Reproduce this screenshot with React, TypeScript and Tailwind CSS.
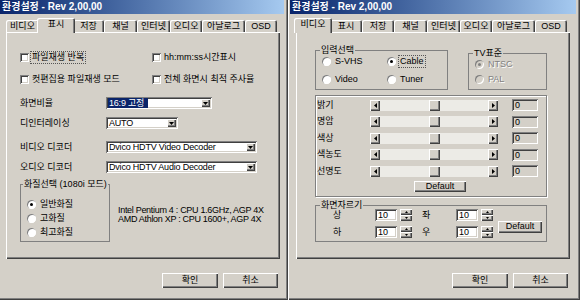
import React from "react";

const RAISED =
  "shadow-[inset_1px_1px_0_#ffffff,inset_-1px_-1px_0_#404040,inset_-2px_-2px_0_#808080]";
const SUNKEN =
  "shadow-[inset_1px_1px_0_#808080,inset_-1px_-1px_0_#ffffff,inset_2px_2px_0_#404040,inset_-2px_-2px_0_#d4d0c8]";
// fieldsets get the plain grey line; a box-shadow there would also run over the legend
const GROUP = "border border-[#808080]";
const BOX = "border border-[#808080] shadow-[inset_1px_1px_0_#ffffff,1px_1px_0_#ffffff]";

function Tri({ dir, color = "#000" }: { dir: "down" | "left" | "right" | "su" | "sd"; color?: string }) {
  if (dir === "down")
    return (
      <svg width="5" height="3" viewBox="0 0 5 3">
        <polygon points="0,0 5,0 2.5,3" fill={color} />
      </svg>
    );
  if (dir === "su")
    return (
      <svg width="3" height="2" viewBox="0 0 3 2">
        <polygon points="0,2 3,2 1.5,0" fill={color} />
      </svg>
    );
  if (dir === "sd")
    return (
      <svg width="3" height="2" viewBox="0 0 3 2">
        <polygon points="0,0 3,0 1.5,2" fill={color} />
      </svg>
    );
  if (dir === "left")
    return (
      <svg width="3" height="5" viewBox="0 0 3 5">
        <polygon points="3,0 3,5 0,2.5" fill={color} />
      </svg>
    );
  return (
    <svg width="3" height="5" viewBox="0 0 3 5">
      <polygon points="0,0 0,5 3,2.5" fill={color} />
    </svg>
  );
}

function Btn({ className = "", children }: { className?: string; children?: React.ReactNode }) {
  return (
    <div className={`flex items-center justify-center bg-[#d4d0c8] ${RAISED} ${className}`}>{children}</div>
  );
}

function Check({ label, focus }: { label: string; focus?: boolean }) {
  return (
    <div className="flex items-center h-[11px]">
      <span className={`w-[9px] h-[9px] bg-white ${SUNKEN}`} />
      <span
        className={`ml-[2px] px-px leading-[11px] ${focus ? "outline outline-1 outline-dotted outline-[#555]" : ""}`}
      >
        {label}
      </span>
    </div>
  );
}

function Radio({
  label,
  checked,
  disabled,
  focus,
}: {
  label: string;
  checked?: boolean;
  disabled?: boolean;
  focus?: boolean;
}) {
  return (
    <div className="flex items-center h-[11px]">
      <span
        className={`w-[9px] h-[9px] rounded-full flex items-center justify-center shadow-[inset_1px_1px_0_#808080,inset_-1px_-1px_0_#ffffff] ${
          disabled ? "bg-[#d4d0c8]" : "bg-white"
        }`}
      >
        {checked && (
          <span className={`w-[3px] h-[3px] rounded-full ${disabled ? "bg-[#808080]" : "bg-black"}`} />
        )}
      </span>
      <span
        className={`ml-[3px] px-px leading-[11px] ${
          disabled ? "text-[#808080] [text-shadow:1px_1px_0_#ffffff]" : ""
        } ${focus ? "outline outline-1 outline-dotted outline-[#555]" : ""}`}
      >
        {label}
      </span>
    </div>
  );
}

function Combo({ value, className, hl }: { value: string; className: string; hl?: boolean }) {
  return (
    <div className={`flex items-center h-[12px] bg-white pl-[2px] pr-[2px] ${SUNKEN} ${className}`}>
      <span className={`flex-1 leading-[9px] tracking-[-0.2px] ${hl ? "" : "pl-px"}`}>
        <span className={hl ? "bg-[#0a246a] text-white px-px pr-[4px]" : ""}>{value}</span>
      </span>
      <Btn className="w-[9px] h-[8px]">
        <Tri dir="down" />
      </Btn>
    </div>
  );
}

function Scroll() {
  return (
    <div className="flex w-[128px] h-[11px]">
      <Btn className="w-[10px] h-[11px]">
        <Tri dir="left" />
      </Btn>
      <div className="flex-1 flex justify-center bg-[#ecebe6]">
        <Btn className="w-[11px] h-[11px]" />
      </div>
      <Btn className="w-[10px] h-[11px]">
        <Tri dir="right" />
      </Btn>
    </div>
  );
}

function SpinEdit() {
  return (
    <div className="flex items-center">
      <div className={`w-[22px] h-[12px] bg-white pl-[3px] leading-[12px] ${SUNKEN}`}>10</div>
      <div className="ml-[3px] flex flex-col w-[12px] h-[12px]">
        <Btn className="h-[6px]">
          <Tri dir="su" />
        </Btn>
        <Btn className="h-[6px]">
          <Tri dir="sd" />
        </Btn>
      </div>
    </div>
  );
}

function Tab({ label, w, sel }: { label: string; w: string; sel?: boolean }) {
  return (
    <div
      className={`${w} flex items-center justify-center bg-[#d4d0c8] rounded-t-[2px] shadow-[inset_1px_1px_0_#ffffff,inset_-1px_0_0_#404040,inset_-2px_0_0_#808080] ${
        sel ? "relative z-10 -mx-[2px] h-[15px] -mb-px pb-[2px]" : "h-[12px]"
      }`}
    >
      {label}
    </div>
  );
}

function TitleBar() {
  return (
    <div className="h-[14px] bg-linear-to-r from-[#0a246a] to-[#a6caf0] text-white font-bold text-[10px] leading-[14px] pl-[2px]">
      환경설정 - Rev 2,00,00
    </div>
  );
}

function Buttons() {
  return (
    <div className="flex gap-[5px] ml-[162px] mt-[14px]">
      <Btn className="w-[56px] h-[15px]">확인</Btn>
      <Btn className="w-[55px] h-[15px]">취소</Btn>
    </div>
  );
}

const PANEL =
  "ml-[6px] w-[274px] h-[227px] bg-[#d4d0c8] shadow-[inset_1px_1px_0_#ffffff,inset_-1px_-1px_0_#404040,inset_-2px_-2px_0_#808080]";

function DisplayWindow() {
  return (
    <div className="flex flex-col h-[300px] w-[288px] pr-[4px] bg-[#d4d0c8] shadow-[inset_-1px_-1px_0_#404040,inset_-2px_-2px_0_#808080]">
      <TitleBar />
      <div className="flex items-end h-[18px] pl-[6px]">
        <Tab label="비디오" w="w-[33px]" />
        <Tab label="표시" w="w-[38px]" sel />
        <Tab label="저장" w="w-[31px]" />
        <Tab label="채널" w="w-[33px]" />
        <Tab label="인터넷" w="w-[33px]" />
        <Tab label="오디오" w="w-[32px]" />
        <Tab label="아날로그" w="w-[43px]" />
        <Tab label="OSD" w="w-[32px]" />
      </div>
      <div className={`${PANEL} flex flex-col pl-[14px]`}>
        <div className="grid grid-cols-[132px_1fr] gap-y-[11px] mt-[20px]">
          <Check label="파일재생 반복" focus />
          <Check label="hh:mm:ss시간표시" />
          <Check label="컷편집용 파일재생 모드" />
          <Check label="전체 화면시 최적 주사율" />
        </div>
        <div className="flex items-center mt-[12px]">
          <span className="w-[86px]">화면비율</span>
          <Combo value="16:9 고정" className="w-[106px]" hl />
        </div>
        <div className="flex items-center mt-[8px]">
          <span className="w-[86px]">디인터레이싱</span>
          <Combo value="AUTO" className="w-[72px]" />
        </div>
        <div className="flex items-center mt-[12px]">
          <span className="w-[86px]">비디오 디코더</span>
          <Combo value="Dvico HDTV Video Decoder" className="w-[151px]" />
        </div>
        <div className="flex items-center mt-[8px]">
          <span className="w-[86px]">오디오 디코더</span>
          <Combo value="Dvico HDTV Audio Decoder" className="w-[151px]" />
        </div>
        <div className="flex items-start mt-[6px]">
          <fieldset className={`${GROUP} w-[90px] h-[63px]`}>
            <legend className="ml-[2px] px-px leading-[11px] whitespace-nowrap">화질선택 (1080i 모드)</legend>
            <div className="flex flex-col gap-[3px] pl-[6px] pt-[9px]">
              <Radio label="일반화질" checked />
              <Radio label="고화질" />
              <Radio label="최고화질" />
            </div>
          </fieldset>
          <div className="ml-[8px] mt-[27px] leading-[9px] tracking-[-0.3px]">
            <div>Intel Pentium 4 : CPU 1.6GHz, AGP 4X</div>
            <div>AMD Athlon XP : CPU 1600+, AGP 4X</div>
          </div>
        </div>
      </div>
      <Buttons />
    </div>
  );
}

function SliderRow({ label }: { label: string }) {
  return (
    <div className="flex items-center h-[12px]">
      <span className="w-[53px]">{label}</span>
      <Scroll />
      <div className={`ml-[14px] w-[26px] h-[12px] pl-[3px] leading-[12px] bg-[#d4d0c8] ${SUNKEN}`}>0</div>
    </div>
  );
}

function VideoWindow() {
  return (
    <div className="flex flex-col h-[300px] w-[292px] pl-[2px] pr-[4px] bg-[#d4d0c8] shadow-[inset_1px_0_0_#ffffff,inset_-1px_-1px_0_#404040,inset_-2px_-2px_0_#808080]">
      <TitleBar />
      <div className="flex items-end h-[18px] pl-[6px]">
        <Tab label="비디오" w="w-[38px]" sel />
        <Tab label="표시" w="w-[32px]" />
        <Tab label="저장" w="w-[32px]" />
        <Tab label="채널" w="w-[33px]" />
        <Tab label="인터넷" w="w-[33px]" />
        <Tab label="오디오" w="w-[32px]" />
        <Tab label="아날로그" w="w-[43px]" />
        <Tab label="OSD" w="w-[32px]" />
      </div>
      <div className={`${PANEL} flex flex-col pl-[19px]`}>
        <div className="flex items-start">
          <fieldset className={`${GROUP} w-[133px] h-[45px] mt-[13px]`}>
            <legend className="ml-[4px] px-px leading-[11px]">입력선택</legend>
            <div className="grid grid-cols-[65px_1fr] gap-y-[7px] pl-[6px]">
              <Radio label="S-VHS" />
              <Radio label="Cable" checked focus />
              <Radio label="Video" />
              <Radio label="Tuner" />
            </div>
          </fieldset>
          <fieldset className={`${GROUP} w-[79px] h-[42px] mt-[16px] ml-[20px]`}>
            <legend className="ml-[4px] px-px leading-[11px]">TV표준</legend>
            <div className="flex flex-col gap-[4px] pl-[6px]">
              <Radio label="NTSC" checked disabled />
              <Radio label="PAL" disabled />
            </div>
          </fieldset>
        </div>
        <div className={`${BOX} w-[232px] h-[102px] mt-[5px] flex flex-col pl-px pt-[3px]`}>
          <div className="flex flex-col gap-[4.5px]">
            <SliderRow label="밝기" />
            <SliderRow label="명암" />
            <SliderRow label="색상" />
            <SliderRow label="색농도" />
            <SliderRow label="선명도" />
          </div>
          <Btn className="ml-[97px] mt-[4px] w-[52px] h-[11px]">Default</Btn>
        </div>
        <fieldset className={`${GROUP} w-[232px] h-[42px] mt-[3px]`}>
          <legend className="ml-[4px] px-px leading-[11px]">화면자르기</legend>
          <div className="flex items-center pl-[17px] -mt-[2px]">
            <div className="flex flex-col gap-[5px]">
              <div className="flex items-center">
                <span className="w-[42px]">상</span>
                <SpinEdit />
                <span className="ml-[10px] w-[34px]">좌</span>
                <SpinEdit />
              </div>
              <div className="flex items-center">
                <span className="w-[42px]">하</span>
                <SpinEdit />
                <span className="ml-[10px] w-[34px]">우</span>
                <SpinEdit />
              </div>
            </div>
            <Btn className="ml-[5px] mt-[6px] w-[44px] h-[12px]">Default</Btn>
          </div>
        </fieldset>
      </div>
      <Buttons />
    </div>
  );
}

export default function App() {
  return (
    <div className="w-[580px] h-[300px] flex bg-[#d4d0c8] text-black text-[9px] leading-[11px] font-['Liberation_Sans','Noto_Sans_CJK_KR',sans-serif] overflow-hidden">
      <DisplayWindow />
      <VideoWindow />
    </div>
  );
}
